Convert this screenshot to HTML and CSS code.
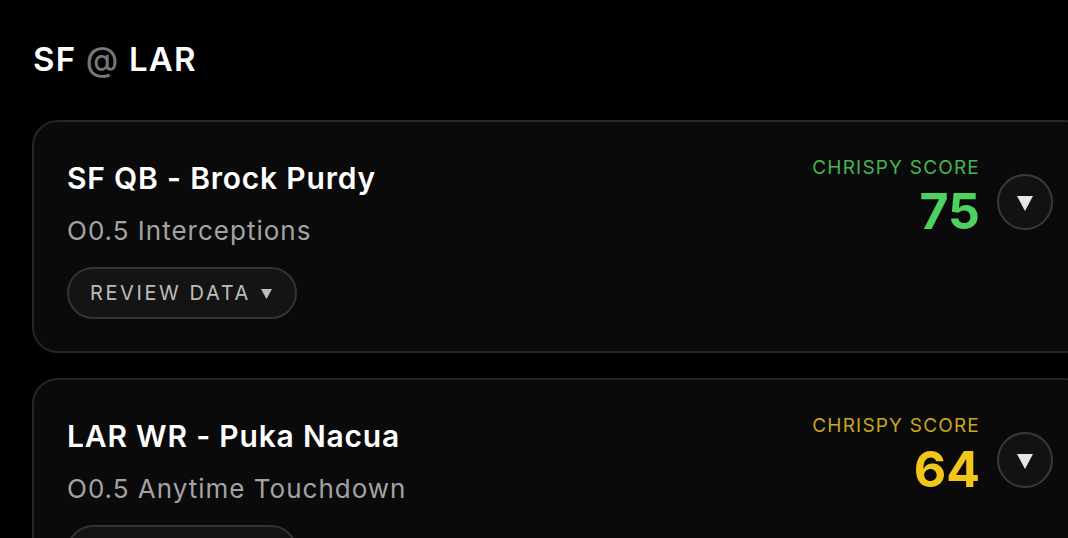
FILE: index.html
```html
<!DOCTYPE html>
<html lang="en">
<head>
    <meta charset="UTF-8">
    <meta name="viewport" content="width=device-width, initial-scale=1.0">
    <title>SF @ LAR</title>
    <link rel="stylesheet" href="styles.css">
</head>
<body>
    <div class="page">
        <h1 class="matchup">SF <span class="at">@</span> LAR</h1>

        <div class="card">
            <div class="pick">
                <h2 class="player">SF QB - Brock Purdy</h2>
                <p class="line">O0.5 Interceptions</p>
                <button class="review">REVIEW DATA
                    <svg class="caret" width="11" height="10" viewBox="0 0 11 10"><path d="M0 0H11L5.5 10Z" fill="currentColor"/></svg>
                </button>
            </div>
            <div class="side">
                <div class="score green">
                    <div class="score-label">CHRISPY SCORE</div>
                    <div class="score-value">75</div>
                </div>
                <button class="expand">
                    <svg width="16" height="16" viewBox="0 0 16 16"><path d="M0 1H16L8 16Z" fill="currentColor"/></svg>
                </button>
            </div>
        </div>

        <div class="card">
            <div class="pick">
                <h2 class="player">LAR WR - Puka Nacua</h2>
                <p class="line">O0.5 Anytime Touchdown</p>
                <button class="review">REVIEW DATA
                    <svg class="caret" width="11" height="10" viewBox="0 0 11 10"><path d="M0 0H11L5.5 10Z" fill="currentColor"/></svg>
                </button>
            </div>
            <div class="side">
                <div class="score yellow">
                    <div class="score-label">CHRISPY SCORE</div>
                    <div class="score-value">64</div>
                </div>
                <button class="expand">
                    <svg width="16" height="16" viewBox="0 0 16 16"><path d="M0 1H16L8 16Z" fill="currentColor"/></svg>
                </button>
            </div>
        </div>
    </div>
</body>
</html>
```

FILE: styles.css
```css
body {
    margin: 0;
    background: #000;
    color: #fff;
    font-family: Inter, "Noto Sans", sans-serif;
    overflow: hidden;
}
.page {
    width: 1058px;
    padding: 39px 0 0 32px;
}
.matchup {
    margin: 0 0 41px 1px;
    font-size: 33px;
    line-height: 40px;
    font-weight: 600;
    letter-spacing: 1.2px;
}
.at {
    color: #777;
    font-weight: 500;
}
.card {
    display: flex;
    justify-content: space-between;
    align-items: flex-start;
    background: #0a0a0a;
    border: 2px solid #262626;
    border-radius: 26px;
    padding: 38px 35px 32px 33px;
    margin-bottom: 25px;
}
.player {
    margin: 0;
    font-size: 30px;
    line-height: 36px;
    font-weight: 600;
    letter-spacing: 0.8px;
}
.line {
    margin: 19px 0 0;
    font-size: 26px;
    line-height: 32px;
    letter-spacing: 1px;
    color: #a3a3a3;
}
.review {
    display: flex;
    align-items: center;
    gap: 10px;
    margin-top: 20px;
    height: 52px;
    padding: 0 23px 0 21px;
    background: #141414;
    border: 2px solid #333;
    border-radius: 26px;
    color: #bdbdbd;
    font-family: inherit;
    font-size: 20px;
    letter-spacing: 2.6px;
    cursor: pointer;
}
.caret {
    margin-top: 2px;
}
.side {
    display: flex;
    align-items: center;
    gap: 17px;
    margin-top: -4px;
}
.score {
    text-align: right;
}
.score-label {
    font-size: 19px;
    line-height: 24px;
    letter-spacing: 1.2px;
}
.score-value {
    margin-top: 5px;
    font-size: 50px;
    line-height: 52px;
    font-weight: 700;
}
.green .score-label { color: #46b553; }
.green .score-value { color: #4fd160; }
.yellow .score-label { color: #c9a61e; }
.yellow .score-value { color: #f2c619; }
.expand {
    display: flex;
    align-items: center;
    justify-content: center;
    width: 56px;
    height: 56px;
    margin-top: 10px;
    padding: 0;
    background: #121212;
    border: 2px solid #3a3a3a;
    border-radius: 50%;
    color: #e6e6e6;
    cursor: pointer;
}
.expand svg {
    margin-top: 3px;
}
```
